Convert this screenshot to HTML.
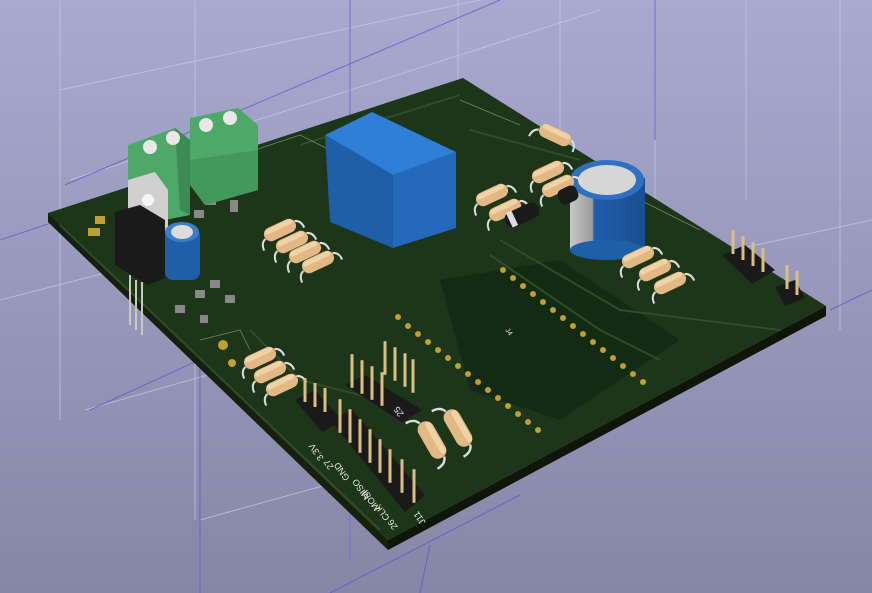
<!DOCTYPE html>
<html><head><meta charset="utf-8"><style>
html,body{margin:0;padding:0;width:872px;height:593px;overflow:hidden;background:#9c9cc4}
svg{display:block}
text{font-family:"Liberation Sans",sans-serif}
</style></head><body>
<svg width="872" height="593" viewBox="0 0 872 593" xmlns="http://www.w3.org/2000/svg">
<defs>
<linearGradient id="bg" x1="0" y1="0" x2="0" y2="1"><stop offset="0" stop-color="#a9a9d0"/><stop offset="1" stop-color="#8686a6"/></linearGradient>
<linearGradient id="cap" x1="0" y1="0" x2="1" y2="0"><stop offset="0" stop-color="#c8c8c8"/><stop offset="0.3" stop-color="#9a9a9a"/><stop offset="0.32" stop-color="#1f5ea8"/><stop offset="1" stop-color="#1a4f90"/></linearGradient>
<g id="res"><rect x="-17" y="-7" width="34" height="14" rx="7" fill="#e2b884"/><rect x="-15" y="-6" width="30" height="5" rx="2.5" fill="#f0d2a6"/><path d="M-17 2 q-6 2 -6 10" stroke="#ddd" stroke-width="2" fill="none"/><path d="M17 -2 q6 2 6 10" stroke="#ddd" stroke-width="2" fill="none"/></g>
<g id="pin"><rect x="-1.5" y="-22" width="3" height="24" fill="#d9bf80"/></g>
</defs>
<rect width="872" height="593" fill="url(#bg)"/>
<g stroke="#c4c4e0" stroke-width="1" fill="none" opacity="0.8">
<path d="M60 0V420M195 0V520M350 0V560M458 0V400M560 0V250M655 0V300M746 0V200M840 0V330"/>
<path d="M60 90L480 0M70 180L600 10M0 300L350 210M85 410L470 300M200 520L560 420M500 300L872 220"/>
</g>
<g stroke="#5a5ad0" stroke-width="1" fill="none" opacity="0.8">
<path d="M65 185L500 0M0 240L60 220M830 310L872 290M90 410L330 300M330 593L520 495M350 0V560M655 0V140M200 300V593M430 545L420 593"/>
</g>
<polygon points="48,213 388,540 388,550 48,222" fill="#17200f"/>
<polygon points="388,540 826,306 826,316 388,550" fill="#0f1509"/>
<polygon points="48,213 463,78 826,306 388,540" fill="#1d3518"/>
<polygon points="440,280 560,260 680,340 560,420 470,390" fill="#132a14"/>
<g stroke="#2f4d26" stroke-width="2" fill="none">
<path d="M490 255L600 330L660 360M500 240L620 310L780 330M250 330L300 380L380 400M60 225L380 530M300 145L460 95M470 130L580 160"/>
</g>
<g stroke="#9aa890" stroke-width="0.8" fill="none" opacity="0.7">
<path d="M255 150L300 135L330 150M460 100L520 125M200 340L240 330L250 350M640 200L700 230"/>
</g>
<g fill="#c0a030">
<circle cx="398" cy="317" r="3"/><circle cx="408" cy="326" r="3"/><circle cx="418" cy="334" r="3"/><circle cx="428" cy="342" r="3"/><circle cx="438" cy="350" r="3"/><circle cx="448" cy="358" r="3"/><circle cx="458" cy="366" r="3"/><circle cx="468" cy="374" r="3"/><circle cx="478" cy="382" r="3"/><circle cx="488" cy="390" r="3"/><circle cx="498" cy="398" r="3"/><circle cx="508" cy="406" r="3"/><circle cx="518" cy="414" r="3"/><circle cx="528" cy="422" r="3"/><circle cx="538" cy="430" r="3"/>
<circle cx="503" cy="270" r="3"/><circle cx="513" cy="278" r="3"/><circle cx="523" cy="286" r="3"/><circle cx="533" cy="294" r="3"/><circle cx="543" cy="302" r="3"/><circle cx="553" cy="310" r="3"/><circle cx="563" cy="318" r="3"/><circle cx="573" cy="326" r="3"/><circle cx="583" cy="334" r="3"/><circle cx="593" cy="342" r="3"/><circle cx="603" cy="350" r="3"/><circle cx="613" cy="358" r="3"/><circle cx="623" cy="366" r="3"/><circle cx="633" cy="374" r="3"/><circle cx="643" cy="382" r="3"/>
<rect x="88" y="228" width="12" height="8"/><rect x="95" y="216" width="10" height="8"/><circle cx="223" cy="345" r="5"/><circle cx="232" cy="363" r="4"/>
</g>
<g fill="#888">
<rect x="194" y="210" width="10" height="8"/><rect x="206" y="195" width="10" height="10"/><rect x="230" y="200" width="8" height="12"/>
<rect x="195" y="290" width="10" height="8"/><rect x="210" y="280" width="10" height="8"/><rect x="225" y="295" width="10" height="8"/><rect x="175" y="305" width="10" height="8"/><rect x="200" y="315" width="8" height="8"/>
</g>
<polygon points="128,145 175,128 190,140 190,215 140,225 128,205" fill="#4ea868"/>
<polygon points="175,128 190,140 190,215 180,210" fill="#3d8a55"/>
<circle cx="150" cy="147" r="7" fill="#e8e8e8"/><circle cx="173" cy="138" r="7" fill="#e8e8e8"/>
<polygon points="190,118 238,108 258,125 258,190 205,205 190,185" fill="#4ea868"/>
<polygon points="190,160 258,150 258,190 205,205 190,185" fill="#43985c"/>
<circle cx="206" cy="125" r="7" fill="#e8e8e8"/><circle cx="230" cy="118" r="7" fill="#e8e8e8"/>
<polygon points="128,180 155,172 168,190 168,230 140,240 128,222" fill="#d0d0d0"/>
<circle cx="148" cy="200" r="6" fill="#f5f5f5"/>
<polygon points="115,212 140,205 165,220 165,278 148,285 115,265" fill="#1a1a1a"/>
<g stroke="#c9c9c0" stroke-width="2"><path d="M130 275V325M136 280V330M142 282V335"/></g>
<rect x="165" y="228" width="35" height="52" rx="8" fill="#1f5fa8"/>
<ellipse cx="182" cy="232" rx="17" ry="10" fill="#3b7ccc"/><ellipse cx="182" cy="232" rx="11" ry="7" fill="#dcdcdc"/>
<polygon points="325,135 372,112 456,152 393,175" fill="#2f7fd6"/>
<polygon points="325,135 393,175 393,248 330,222" fill="#1e5fa8"/>
<polygon points="393,175 456,152 456,228 393,248" fill="#2469bb"/>
<rect x="570" y="178" width="75" height="72" fill="url(#cap)"/>
<ellipse cx="607" cy="250" rx="37" ry="10" fill="#1f5ea8"/>
<ellipse cx="607" cy="180" rx="37" ry="20" fill="#2f70c0"/><ellipse cx="607" cy="180" rx="29" ry="15" fill="#d6d6d6"/>
<use href="#res" transform="translate(280,230) rotate(-25)"/><use href="#res" transform="translate(292,242) rotate(-25)"/><use href="#res" transform="translate(305,252) rotate(-25)"/><use href="#res" transform="translate(318,262) rotate(-25)"/>
<use href="#res" transform="translate(555,135) rotate(25)"/><use href="#res" transform="translate(548,172) rotate(-25)"/><use href="#res" transform="translate(558,186) rotate(-25)"/>
<use href="#res" transform="translate(492,195) rotate(-25)"/><use href="#res" transform="translate(505,210) rotate(-25)"/>
<use href="#res" transform="translate(638,257) rotate(-25)"/><use href="#res" transform="translate(655,270) rotate(-25)"/><use href="#res" transform="translate(670,283) rotate(-25)"/>
<use href="#res" transform="translate(260,358) rotate(-25)"/><use href="#res" transform="translate(270,372) rotate(-25)"/><use href="#res" transform="translate(282,385) rotate(-25)"/>
<use href="#res" transform="translate(432,440) rotate(60) scale(1.2)"/><use href="#res" transform="translate(458,428) rotate(60) scale(1.2)"/>
<rect x="-18" y="-8" width="36" height="16" rx="7" fill="#1a1a1a" transform="translate(522,215) rotate(-25)"/>
<rect x="-3" y="-8" width="6" height="16" fill="#ddd" transform="translate(512,219) rotate(-25)"/>
<rect x="-10" y="-8" width="20" height="16" rx="6" fill="#1a1a1a" transform="translate(568,195) rotate(-25)"/>
<g fill="#1a1a1a">
<polygon points="722,255 745,245 775,270 752,284"/><polygon points="775,287 795,280 805,298 785,306"/>
<polygon points="345,385 365,375 422,410 402,422"/><polygon points="295,400 315,390 342,420 322,432"/>
<polygon points="330,420 352,410 425,495 405,512"/>
</g>
<g>
<use href="#pin" transform="translate(733,252)"/><use href="#pin" transform="translate(743,258)"/><use href="#pin" transform="translate(753,264)"/><use href="#pin" transform="translate(763,270)"/>
<use href="#pin" transform="translate(787,287)"/><use href="#pin" transform="translate(797,293)"/>
<use href="#pin" transform="translate(385,372) scale(1,1.4)"/><use href="#pin" transform="translate(395,378) scale(1,1.4)"/><use href="#pin" transform="translate(405,384) scale(1,1.4)"/><use href="#pin" transform="translate(413,390) scale(1,1.4)"/>
<use href="#pin" transform="translate(352,385) scale(1,1.4)"/><use href="#pin" transform="translate(362,391) scale(1,1.4)"/><use href="#pin" transform="translate(372,397) scale(1,1.4)"/><use href="#pin" transform="translate(382,403) scale(1,1.4)"/>
<use href="#pin" transform="translate(305,400)"/><use href="#pin" transform="translate(315,405)"/><use href="#pin" transform="translate(325,410)"/>
<use href="#pin" transform="translate(340,430) scale(1,1.4)"/><use href="#pin" transform="translate(350,440) scale(1,1.4)"/><use href="#pin" transform="translate(360,450) scale(1,1.4)"/><use href="#pin" transform="translate(370,460) scale(1,1.4)"/><use href="#pin" transform="translate(380,470) scale(1,1.4)"/><use href="#pin" transform="translate(390,480) scale(1,1.4)"/><use href="#pin" transform="translate(402,490) scale(1,1.4)"/><use href="#pin" transform="translate(414,500) scale(1,1.4)"/>
</g>
<g fill="#e8e8e8" font-size="9">
<text transform="translate(324,458) rotate(235)">3.3V</text>
<text transform="translate(334,467) rotate(235)">27</text>
<text transform="translate(350,478) rotate(235)">GND</text>
<text transform="translate(370,497) rotate(235)">MISO</text>
<text transform="translate(380,508) rotate(235)">MOSI</text>
<text transform="translate(390,518) rotate(235)">CLK</text>
<text transform="translate(398,527) rotate(235)">26</text>
<text transform="translate(426,522) rotate(235)">J11</text>
<text transform="translate(404,414) rotate(235)">25</text>
<text transform="translate(505,330) rotate(55)" font-size="7">J4</text>
</g>
</svg>
</body></html>
